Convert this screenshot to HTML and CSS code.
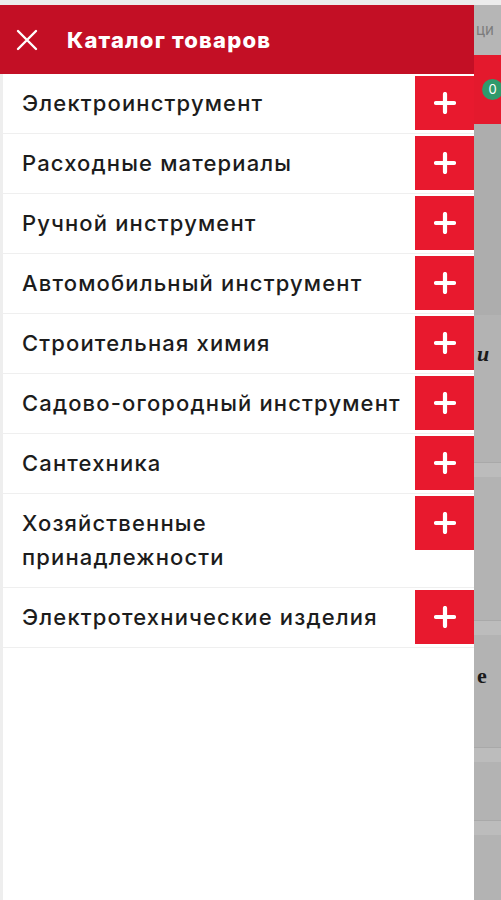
FILE: index.html
```html
<!DOCTYPE html>
<html lang="ru">
<head>
    <meta charset="UTF-8">
    <meta name="viewport" content="width=device-width, initial-scale=1.0">
    <title>Каталог товаров</title>
    <link rel="stylesheet" href="styles.css">
</head>
<body>
    <div class="screen">
        <aside class="drawer">
            <header class="drawer-head">
                <button class="close" aria-label="Закрыть">
                    <svg width="22" height="22" viewBox="0 0 22 22">
                        <path d="M2 2 L20 20 M20 2 L2 20" stroke="#fff" stroke-width="2.4" stroke-linecap="round"/>
                    </svg>
                </button>
                <h1>Каталог товаров</h1>
            </header>
            <ul class="menu" id="menu"></ul>
        </aside>
        <div class="page-edge">
            <div class="edge-top">ци</div>
            <div class="edge-red"><span class="badge">0</span></div>
            <div class="edge-dark"></div>
            <div class="edge-block">и</div>
            <div class="edge-stripe"></div>
            <div class="edge-gap s1"></div>
            <div class="edge-stripe"></div>
            <div class="edge-block short">е</div>
            <div class="edge-stripe"></div>
            <div class="edge-gap s2"></div>
            <div class="edge-stripe"></div>
        </div>
    </div>

    <script>
        const categories = [
            'Электроинструмент',
            'Расходные материалы',
            'Ручной инструмент',
            'Автомобильный инструмент',
            'Строительная химия',
            'Садово-огородный инструмент',
            'Сантехника',
            'Хозяйственные принадлежности',
            'Электротехнические изделия'
        ];

        const menu = document.getElementById('menu');
        categories.forEach(name => {
            const item = document.createElement('li');
            item.className = 'menu-item';
            item.innerHTML = `<span class="menu-name">${name}</span>
                <button class="expand" aria-label="Открыть">
                    <svg width="22" height="22" viewBox="0 0 22 22">
                        <path d="M11 2 V20 M2 11 H20" stroke="#fff" stroke-width="4.2" stroke-linecap="round"/>
                    </svg>
                </button>`;
            menu.appendChild(item);
        });
    </script>
</body>
</html>
```

FILE: styles.css
```css
body {
    margin: 0;
    padding-top: 5px;
    background-color: #ececec;
    font-family: Inter, "Noto Sans", sans-serif;
}
.screen {
    display: flex;
    height: 895px;
    overflow: hidden;
}
.drawer {
    width: 474px;
    flex-shrink: 0;
    background: #fff;
    display: flex;
    flex-direction: column;
}
.drawer-head {
    height: 69px;
    background-color: #c30f25;
    display: flex;
    align-items: center;
    padding-left: 16px;
}
.close {
    background: none;
    border: none;
    padding: 0;
    width: 22px;
    height: 22px;
    margin-right: 29px;
    cursor: pointer;
}
.drawer-head h1 {
    margin: 0;
    color: #fff;
    font-size: 22px;
    font-weight: 800;
    letter-spacing: 1.2px;
}
.menu {
    list-style: none;
    margin: 0;
    padding: 0;
    flex: 1;
    border-left: 3px solid #eeeeee;
}
.menu-item {
    display: flex;
    align-items: flex-start;
    border-bottom: 1px solid #efefef;
}
.menu-name {
    flex: 1;
    padding: 12px 2px 13px 19px;
    font-size: 22px;
    font-weight: 500;
    line-height: 34px;
    letter-spacing: 1.15px;
    color: #1c1c1c;
}
.expand {
    width: 59px;
    height: 54px;
    margin-top: 2px;
    flex-shrink: 0;
    background-color: #e8192e;
    border: none;
    padding: 0;
    display: flex;
    align-items: center;
    justify-content: center;
    cursor: pointer;
}
.page-edge {
    flex: 1;
    background-color: #b3b3b3;
    display: flex;
    flex-direction: column;
    font-family: "Liberation Serif", serif;
    overflow: hidden;
}
.edge-top {
    height: 50px;
    background-color: #b6b6b6;
    color: #7c7c7c;
    font-family: Inter, sans-serif;
    font-size: 15px;
    line-height: 50px;
    padding-left: 2px;
}
.edge-red {
    height: 69px;
    background-color: #e4192d;
    display: flex;
    align-items: center;
}
.badge {
    margin-left: 8px;
    width: 21px;
    height: 21px;
    border-radius: 50%;
    background-color: #2f9a6c;
    color: #fff;
    font-family: Inter, sans-serif;
    font-size: 13px;
    line-height: 21px;
    text-align: center;
    flex-shrink: 0;
}
.edge-dark {
    height: 191px;
    background-color: #adadad;
}
.edge-block {
    height: 147px;
    font-size: 22px;
    font-weight: bold;
    font-style: italic;
    color: #1a1a1a;
    padding: 26px 0 0 3px;
    box-sizing: border-box;
}
.edge-block.short {
    height: 112px;
    font-style: normal;
    padding-top: 28px;
}
.edge-stripe {
    height: 14px;
    background-color: #bcbcbc;
    border-top: 1px solid #a9a9a9;
}
.edge-gap.s1 {
    height: 143px;
}
.edge-gap.s2 {
    height: 58px;
}
```
